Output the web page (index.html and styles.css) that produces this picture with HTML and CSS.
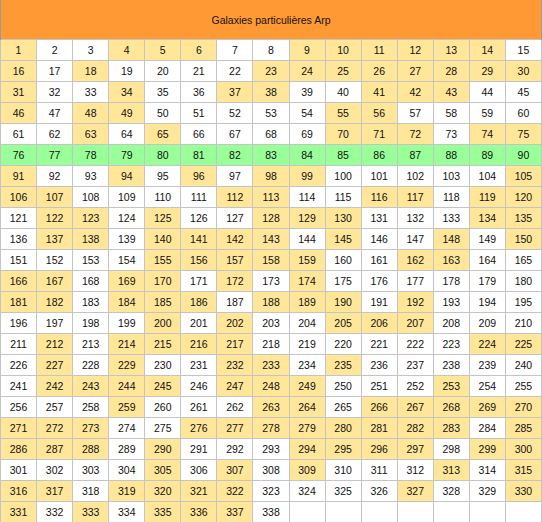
FILE: index.html
```html
<!DOCTYPE html>
<html lang="fr">
<head>
<meta charset="utf-8">
<title>Galaxies particulières Arp</title>
<link rel="stylesheet" href="styles.css">
</head>
<body>
<table class="arp">
<thead>
<tr><th colspan="15" class="title">Galaxies particulières Arp</th></tr>
</thead>
<tbody>
<tr><td class="y">1</td><td>2</td><td>3</td><td class="y">4</td><td class="y">5</td><td class="y">6</td><td>7</td><td>8</td><td class="y">9</td><td class="y">10</td><td class="y">11</td><td class="y">12</td><td class="y">13</td><td class="y">14</td><td>15</td></tr>
<tr><td class="y">16</td><td>17</td><td class="y">18</td><td>19</td><td>20</td><td>21</td><td>22</td><td class="y">23</td><td class="y">24</td><td class="y">25</td><td class="y">26</td><td class="y">27</td><td class="y">28</td><td class="y">29</td><td class="y">30</td></tr>
<tr><td class="y">31</td><td>32</td><td>33</td><td class="y">34</td><td>35</td><td>36</td><td class="y">37</td><td class="y">38</td><td>39</td><td>40</td><td class="y">41</td><td class="y">42</td><td class="y">43</td><td>44</td><td>45</td></tr>
<tr><td class="y">46</td><td>47</td><td class="y">48</td><td class="y">49</td><td>50</td><td>51</td><td>52</td><td>53</td><td>54</td><td class="y">55</td><td class="y">56</td><td>57</td><td>58</td><td>59</td><td>60</td></tr>
<tr><td>61</td><td>62</td><td class="y">63</td><td>64</td><td class="y">65</td><td>66</td><td>67</td><td>68</td><td>69</td><td class="y">70</td><td class="y">71</td><td class="y">72</td><td>73</td><td class="y">74</td><td class="y">75</td></tr>
<tr class="g"><td>76</td><td>77</td><td>78</td><td>79</td><td>80</td><td>81</td><td>82</td><td>83</td><td>84</td><td>85</td><td>86</td><td>87</td><td>88</td><td>89</td><td>90</td></tr>
<tr><td class="y">91</td><td>92</td><td>93</td><td class="y">94</td><td>95</td><td class="y">96</td><td>97</td><td class="y">98</td><td class="y">99</td><td>100</td><td>101</td><td>102</td><td>103</td><td>104</td><td class="y">105</td></tr>
<tr><td class="y">106</td><td class="y">107</td><td>108</td><td>109</td><td>110</td><td>111</td><td class="y">112</td><td class="y">113</td><td>114</td><td>115</td><td class="y">116</td><td class="y">117</td><td>118</td><td class="y">119</td><td class="y">120</td></tr>
<tr><td>121</td><td class="y">122</td><td class="y">123</td><td>124</td><td class="y">125</td><td>126</td><td>127</td><td class="y">128</td><td class="y">129</td><td class="y">130</td><td>131</td><td>132</td><td>133</td><td class="y">134</td><td class="y">135</td></tr>
<tr><td>136</td><td class="y">137</td><td class="y">138</td><td>139</td><td class="y">140</td><td class="y">141</td><td class="y">142</td><td class="y">143</td><td>144</td><td class="y">145</td><td>146</td><td>147</td><td class="y">148</td><td>149</td><td class="y">150</td></tr>
<tr><td>151</td><td>152</td><td>153</td><td>154</td><td class="y">155</td><td class="y">156</td><td class="y">157</td><td class="y">158</td><td class="y">159</td><td>160</td><td>161</td><td class="y">162</td><td class="y">163</td><td>164</td><td>165</td></tr>
<tr><td class="y">166</td><td class="y">167</td><td>168</td><td class="y">169</td><td class="y">170</td><td>171</td><td class="y">172</td><td>173</td><td class="y">174</td><td>175</td><td>176</td><td>177</td><td>178</td><td>179</td><td>180</td></tr>
<tr><td class="y">181</td><td class="y">182</td><td>183</td><td class="y">184</td><td class="y">185</td><td class="y">186</td><td>187</td><td class="y">188</td><td class="y">189</td><td class="y">190</td><td>191</td><td class="y">192</td><td>193</td><td>194</td><td>195</td></tr>
<tr><td>196</td><td>197</td><td>198</td><td>199</td><td class="y">200</td><td>201</td><td class="y">202</td><td>203</td><td>204</td><td class="y">205</td><td class="y">206</td><td class="y">207</td><td>208</td><td>209</td><td>210</td></tr>
<tr><td>211</td><td class="y">212</td><td>213</td><td class="y">214</td><td class="y">215</td><td class="y">216</td><td class="y">217</td><td>218</td><td>219</td><td>220</td><td>221</td><td>222</td><td>223</td><td class="y">224</td><td class="y">225</td></tr>
<tr><td>226</td><td class="y">227</td><td>228</td><td class="y">229</td><td>230</td><td>231</td><td class="y">232</td><td class="y">233</td><td>234</td><td class="y">235</td><td>236</td><td>237</td><td>238</td><td>239</td><td>240</td></tr>
<tr><td>241</td><td class="y">242</td><td class="y">243</td><td class="y">244</td><td class="y">245</td><td>246</td><td class="y">247</td><td class="y">248</td><td class="y">249</td><td>250</td><td>251</td><td>252</td><td class="y">253</td><td>254</td><td>255</td></tr>
<tr><td>256</td><td>257</td><td>258</td><td class="y">259</td><td>260</td><td>261</td><td>262</td><td class="y">263</td><td class="y">264</td><td>265</td><td class="y">266</td><td class="y">267</td><td class="y">268</td><td class="y">269</td><td class="y">270</td></tr>
<tr><td class="y">271</td><td class="y">272</td><td class="y">273</td><td>274</td><td>275</td><td class="y">276</td><td class="y">277</td><td class="y">278</td><td class="y">279</td><td class="y">280</td><td class="y">281</td><td class="y">282</td><td class="y">283</td><td>284</td><td class="y">285</td></tr>
<tr><td class="y">286</td><td class="y">287</td><td class="y">288</td><td>289</td><td class="y">290</td><td>291</td><td>292</td><td>293</td><td class="y">294</td><td class="y">295</td><td class="y">296</td><td class="y">297</td><td>298</td><td class="y">299</td><td class="y">300</td></tr>
<tr><td>301</td><td>302</td><td>303</td><td>304</td><td class="y">305</td><td>306</td><td class="y">307</td><td>308</td><td class="y">309</td><td>310</td><td>311</td><td>312</td><td class="y">313</td><td>314</td><td class="y">315</td></tr>
<tr><td class="y">316</td><td class="y">317</td><td>318</td><td class="y">319</td><td class="y">320</td><td class="y">321</td><td class="y">322</td><td>323</td><td>324</td><td>325</td><td>326</td><td class="y">327</td><td>328</td><td>329</td><td class="y">330</td></tr>
<tr><td class="y">331</td><td>332</td><td class="y">333</td><td>334</td><td class="y">335</td><td class="y">336</td><td class="y">337</td><td>338</td><td></td><td></td><td></td><td></td><td></td><td></td><td></td></tr>
</tbody>
</table>
</body>
</html>
```

FILE: styles.css
```css
html, body {
  margin: 0;
  padding: 0;
  background: #ffffff;
}

.arp {
  border-collapse: collapse;
  table-layout: fixed;
  width: 542px;
  font-family: "Liberation Sans", Arial, sans-serif;
  font-size: 10.5px;
  color: #111111;
  border-left: 1px solid #9a9a9a;
  border-right: 1px solid #9a9a9a;
  border-bottom: 1px solid #9a9a9a;
}

.title {
  background: #ff9933;
  height: 39px;
  padding: 0;
  font-weight: normal;
  font-size: 10.5px;
  text-align: center;
  vertical-align: middle;
  border: none;
  border-left: 1px solid #9a9a9a;
  border-right: 1px solid #9a9a9a;
}

.arp td {
  height: 20px;
  padding: 0;
  text-align: center;
  vertical-align: middle;
  border: 1px solid #c4c4c4;
  background: #ffffff;
  line-height: 12px;
}

.arp td.y {
  background: #ffe699;
}

.arp tr.g td {
  background: #99ff99;
}
```
